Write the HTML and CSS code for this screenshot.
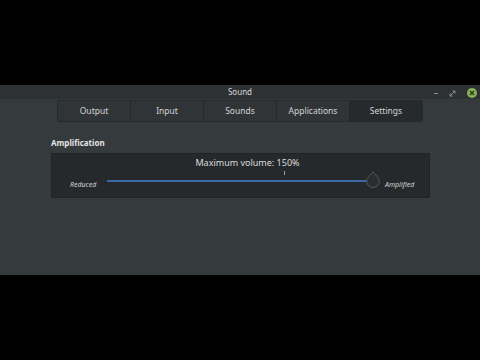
FILE: index.html
```html
<!DOCTYPE html>
<html lang="en">
<head>
    <meta charset="UTF-8">
    <title>Sound</title>
    <link rel="stylesheet" href="styles.css">
</head>
<body>
    <div class="window">
        <!-- 标题栏 -->
        <div class="titlebar">
            <span class="title">Sound</span>
            <div class="controls">
                <span class="min"></span>
                <svg class="restore" width="7" height="7" viewBox="0 0 7 7"><path d="M1 6 L6 1 M3.5 1 H6 V3.5 M1 3.5 V6 H3.5" stroke="#8a8d90" stroke-width="1" fill="none"/></svg>
                <span class="close"><svg width="6" height="6" viewBox="0 0 6 6"><path d="M1 1 L5 5 M5 1 L1 5" stroke="#2b3a1c" stroke-width="1.4"/></svg></span>
            </div>
        </div>
        <!-- 标签 -->
        <ul class="tabs">
            <li>Output</li>
            <li>Input</li>
            <li>Sounds</li>
            <li>Applications</li>
            <li class="current">Settings</li>
        </ul>
        <div class="content">
            <h3 class="heading">Amplification</h3>
            <div class="box">
                <div class="label">Maximum volume: 150%</div>
                <div class="row">
                    <span class="side left">Reduced</span>
                    <div class="slider">
                        <span class="tick"></span>
                        <span class="track"></span>
                        <svg class="knob" width="14" height="17" viewBox="0 0 14 17"><path d="M7 0.8 C9 3.5 13.3 6.5 13.3 10.2 A6.3 6.3 0 0 1 0.7 10.2 C0.7 6.5 5 3.5 7 0.8 Z" fill="#2b2e31" stroke="#55595c" stroke-width="1"/></svg>
                    </div>
                    <span class="side right">Amplified</span>
                </div>
            </div>
        </div>
    </div>
</body>
</html>
```
FILE: styles.css
```css
* {
    margin: 0;
    padding: 0;
}
body {
    width: 480px;
    height: 360px;
    background: #000;
    font-family: "Noto Sans", "DejaVu Sans", sans-serif;
    overflow: hidden;
}
ul {
    list-style: none;
}
.window {
    margin-top: 85px;
    height: 190px;
    background: #353a3d;
}
/* 标题栏 */
.titlebar {
    height: 14px;
    background: #2e3134;
    position: relative;
    text-align: center;
    font-size: 8px;
    line-height: 14px;
}
.title {
    color: #d8d9da;
}
.controls {
    position: absolute;
    right: 3px;
    top: 3px;
    display: flex;
    align-items: center;
    gap: 11px;
    height: 10px;
}
.min {
    width: 4px;
    height: 1px;
    background: #8a8d90;
}
.close {
    width: 10px;
    height: 10px;
    border-radius: 50%;
    background: #87b158;
    display: flex;
    align-items: center;
    justify-content: center;
}
/* 标签 */
.tabs {
    display: flex;
    width: 366px;
    height: 22px;
    margin: 1px 0 0 57px;
    background: #303437;
    border: 1px solid #272a2d;
    box-sizing: border-box;
    border-radius: 2px;
}
.tabs li {
    flex: 1;
    font-size: 8.5px;
    line-height: 20px;
    text-align: center;
    color: #d3d5d6;
    border-right: 1px solid #25282b;
}
.tabs li:last-child {
    border-right: none;
}
.tabs li.current {
    background: #272a2d;
}
.content {
    padding: 15px 50px 0 51px;
}
.heading {
    font-size: 8px;
    font-weight: bold;
    color: #e4e5e6;
    line-height: 12px;
}
.box {
    margin-top: 4px;
    height: 45px;
    width: 379px;
    box-sizing: border-box;
    background: #26292c;
    border: 1px solid #202325;
    padding-top: 3px;
}
.label {
    text-align: center;
    font-size: 9px;
    line-height: 12px;
    color: #dcdddd;
    padding-left: 14px;
}
.row {
    display: flex;
    align-items: flex-start;
    margin-top: 2px;
    height: 22px;
}
.side {
    font-size: 7px;
    font-style: italic;
    color: #d0d2d3;
    padding-top: 9px;
}
.side.left {
    width: 55px;
    padding-left: 18px;
    box-sizing: border-box;
}
.side.right {
    width: 49px;
    padding-left: 5px;
    box-sizing: border-box;
}
.slider {
    flex: 1;
    height: 22px;
    position: relative;
}
.track {
    position: absolute;
    left: 0;
    right: 8px;
    top: 9px;
    height: 2px;
    background: #3a6aa4;
}
.tick {
    position: absolute;
    left: 177px;
    top: 0;
    width: 1px;
    height: 4px;
    background: #9a9c9e;
}
.knob {
    position: absolute;
    right: 0;
    top: 0;
}
```
